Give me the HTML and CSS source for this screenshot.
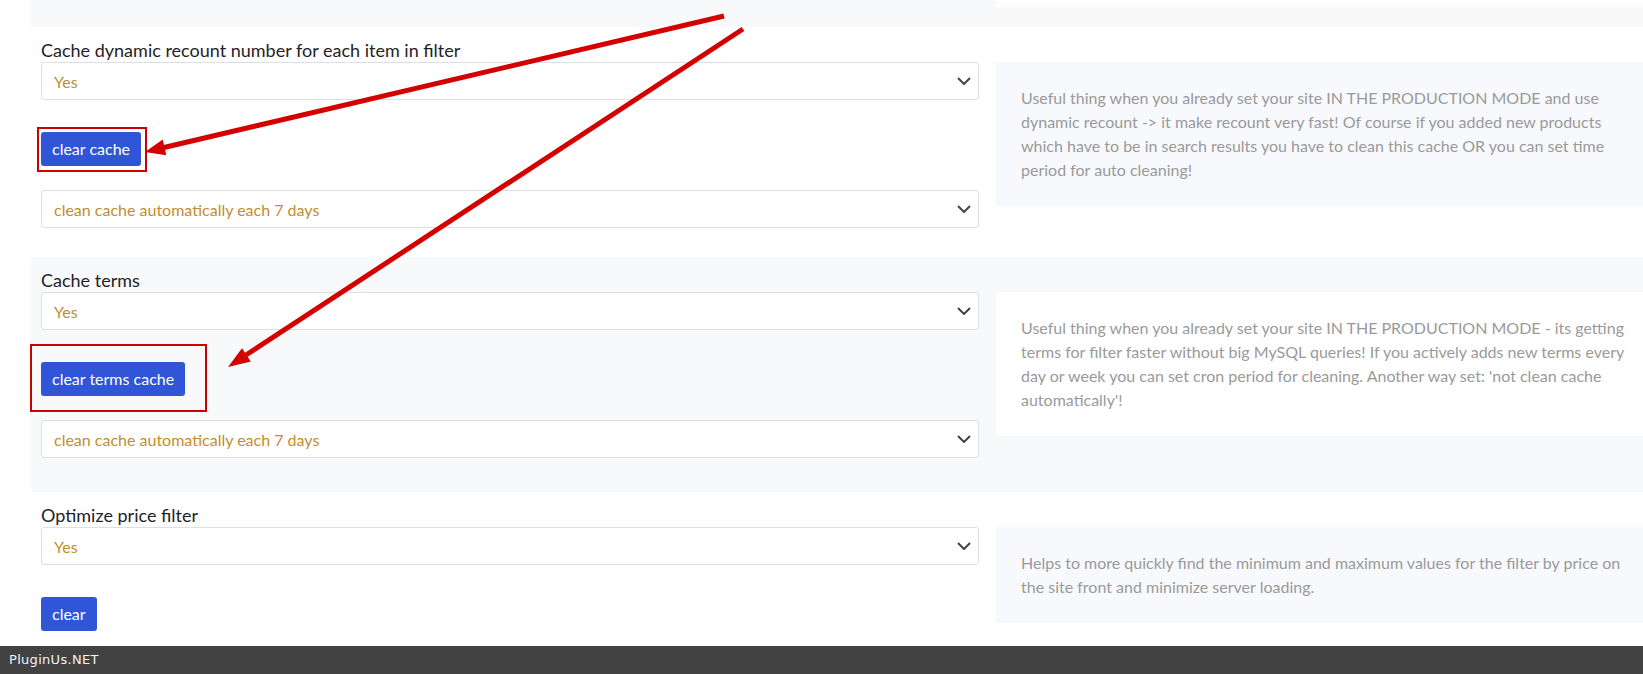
FILE: index.html
```html
<!DOCTYPE html>
<html lang="en">
<head>
  <meta charset="UTF-8" />
  <meta name="viewport" content="width=device-width, initial-scale=1.0" />
  <title>Cache options</title>
  <link rel="stylesheet" href="styles.css">
</head>
<body>
  <div class="options">
    <div class="section-end alt">
      <div class="help-end"></div>
    </div>

    <div class="section">
      <label class="opt-title">Cache dynamic recount number for each item in filter</label>
      <div class="opt-row">
        <div class="opt-fields">
          <div class="select-wrap">
            <select class="opt-select"><option>Yes</option><option>No</option></select>
            <svg class="chevron" viewBox="0 0 14 8"><polyline points="1,1 7,7 13,1" /></svg>
          </div>
          <button class="opt-btn">clear cache</button>
          <div class="select-wrap">
            <select class="opt-select"><option>clean cache automatically each 7 days</option></select>
            <svg class="chevron" viewBox="0 0 14 8"><polyline points="1,1 7,7 13,1" /></svg>
          </div>
        </div>
        <div class="opt-help">
          Useful thing when you already set your site IN THE PRODUCTION MODE and use dynamic recount -&gt; it make recount very fast! Of course if you added new products which have to be in search results you have to clean this cache OR you can set time period for auto cleaning!
        </div>
      </div>
    </div>

    <div class="section alt">
      <label class="opt-title">Cache terms</label>
      <div class="opt-row">
        <div class="opt-fields">
          <div class="select-wrap">
            <select class="opt-select"><option>Yes</option><option>No</option></select>
            <svg class="chevron" viewBox="0 0 14 8"><polyline points="1,1 7,7 13,1" /></svg>
          </div>
          <button class="opt-btn">clear terms cache</button>
          <div class="select-wrap">
            <select class="opt-select"><option>clean cache automatically each 7 days</option></select>
            <svg class="chevron" viewBox="0 0 14 8"><polyline points="1,1 7,7 13,1" /></svg>
          </div>
        </div>
        <div class="opt-help">
          Useful thing when you already set your site IN THE PRODUCTION MODE - its getting terms for filter faster without big MySQL queries! If you actively adds new terms every day or week you can set cron period for cleaning. Another way set: 'not clean cache automatically'!
        </div>
      </div>
    </div>

    <div class="section">
      <label class="opt-title">Optimize price filter</label>
      <div class="opt-row">
        <div class="opt-fields">
          <div class="select-wrap">
            <select class="opt-select"><option>Yes</option><option>No</option></select>
            <svg class="chevron" viewBox="0 0 14 8"><polyline points="1,1 7,7 13,1" /></svg>
          </div>
          <button class="opt-btn">clear</button>
        </div>
        <div class="opt-help">
          Helps to more quickly find the minimum and maximum values for the filter by price on the site front and minimize server loading.
        </div>
      </div>
    </div>
  </div>

  <!-- red annotations drawn over the screenshot -->
  <svg class="marks" width="1643" height="674" viewBox="0 0 1643 674">
    <rect x="38" y="128" width="108" height="43" />
    <rect x="31" y="345" width="175" height="66" />
    <line x1="724" y1="16" x2="164" y2="147.5" />
    <polygon points="145,152 166.3,155.2 162.7,139.6" />
    <line x1="743" y1="29" x2="246" y2="355" />
    <polygon points="228,367 250.8,361.6 242,348.2" />
  </svg>

  <div class="footer">PluginUs.NET</div>
</body>
</html>
```

FILE: styles.css
```css
body {
  margin: 0;
  position: relative;
  background: #fff;
  font-family: 'Lato', 'Noto Sans', Arial, sans-serif;
  color: #1f2328;
}

.options {
  margin-left: 31px;
}

.alt {
  background: #f8f9fb;
}

.section-end {
  height: 27px;
  display: flex;
  justify-content: flex-end;
}

.help-end {
  width: 647px;
  height: 7px;
  background: #fff;
}

.section {
  padding: 11px 0 29px 10px;
}

.section.alt {
  padding-bottom: 34px;
}

.opt-title {
  display: block;
  font-size: 18px;
  line-height: 24px;
}

.opt-row {
  display: flex;
  gap: 17px;
  align-items: flex-start;
}

.opt-fields {
  flex: 1;
  display: flex;
  flex-direction: column;
  align-items: flex-start;
}

.select-wrap {
  position: relative;
  width: 100%;
}

.opt-select {
  display: block;
  width: 100%;
  height: 38px;
  padding: 0 40px 0 12px;
  border: 1px solid #dcdfe3;
  border-radius: 3px;
  background: #fff;
  color: #c28d2f;
  font-family: inherit;
  font-size: 16px;
  appearance: none;
  -webkit-appearance: none;
  outline: none;
}

.chevron {
  position: absolute;
  right: 8px;
  top: 15px;
  width: 14px;
  height: 8px;
  fill: none;
  stroke: #444;
  stroke-width: 2;
  pointer-events: none;
}

.opt-btn {
  margin: 32px 0 24px;
  padding: 6px 11px;
  border: none;
  border-radius: 3px;
  background: #3055d6;
  color: #fff;
  font-family: inherit;
  font-size: 16px;
  line-height: 22px;
  cursor: pointer;
}

.opt-fields .opt-btn:last-child {
  margin-bottom: 0;
}

.opt-help {
  width: 647px;
  box-sizing: border-box;
  padding: 24px 10px 24px 25px;
  background: #f8f9fc;
  color: #9a9a9a;
  font-size: 16px;
  line-height: 24px;
}

.alt .opt-help {
  background: #fff;
}

.marks {
  position: absolute;
  top: 0;
  left: 0;
  pointer-events: none;
}

.marks rect {
  fill: none;
  stroke: #cc0000;
  stroke-width: 2;
}

.marks line {
  stroke: #d40000;
  stroke-width: 5;
}

.marks polygon {
  fill: #d40000;
}

.footer {
  position: fixed;
  left: 0;
  right: 0;
  bottom: 0;
  height: 28px;
  padding-left: 9px;
  background: #424242;
  color: #f2f2f2;
  font-family: 'DejaVu Sans', sans-serif;
  font-size: 13px;
  letter-spacing: 0.3px;
  line-height: 28px;
}
```
